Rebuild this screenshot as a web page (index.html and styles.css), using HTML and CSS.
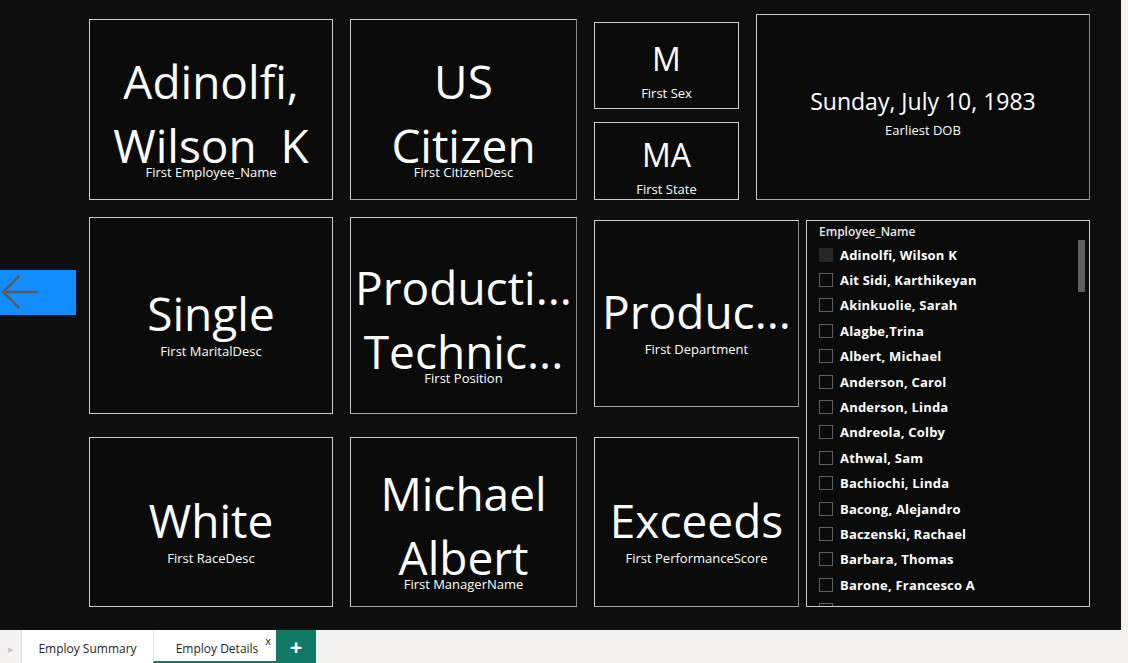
FILE: index.html
```html
<!DOCTYPE html>
<html lang="en">
<head>
    <meta charset="UTF-8">
    <meta name="viewport" content="width=device-width, initial-scale=1.0">
    <title>Employ Details</title>
    <link rel="stylesheet" href="styles.css">
</head>
<body>
    <main class="canvas">
        <div class="back-cell">
            <button class="back-btn" aria-label="Back">
                <svg width="76" height="45" viewBox="0 0 76 45">
                    <path d="M38 22H3M19 6L3 22L19 38" fill="none" stroke="#5b5b5b" stroke-width="2.5"/>
                </svg>
            </button>
        </div>

        <div class="card name">
            <div class="value two-line">Adinolfi,<br>Wilson&nbsp; K</div>
            <div class="label">First Employee_Name</div>
        </div>
        <div class="card citizen shade">
            <div class="value two-line">US<br>Citizen</div>
            <div class="label">First CitizenDesc</div>
        </div>
        <div class="mini-stack">
            <div class="card mini sex">
                <div class="value">M</div>
                <div class="label">First Sex</div>
            </div>
            <div class="card mini state">
                <div class="value">MA</div>
                <div class="label">First State</div>
            </div>
        </div>
        <div class="card dob shade">
            <div class="value">Sunday, July 10, 1983</div>
            <div class="label">Earliest DOB</div>
        </div>

        <div class="card marital">
            <div class="value">Single</div>
            <div class="label">First MaritalDesc</div>
        </div>
        <div class="card position shade">
            <div class="value two-line">Producti...<br>Technic...</div>
            <div class="label">First Position</div>
        </div>
        <div class="card department shade">
            <div class="value">Produc...</div>
            <div class="label">First Department</div>
        </div>

        <div class="slicer shade">
            <div class="slicer-title">Employee_Name</div>
            <ul class="slicer-list">
                <li><span class="check filled"></span>Adinolfi, Wilson K</li>
                <li><span class="check"></span>Ait Sidi, Karthikeyan</li>
                <li><span class="check"></span>Akinkuolie, Sarah</li>
                <li><span class="check"></span>Alagbe,Trina</li>
                <li><span class="check"></span>Albert, Michael</li>
                <li><span class="check"></span>Anderson, Carol</li>
                <li><span class="check"></span>Anderson, Linda</li>
                <li><span class="check"></span>Andreola, Colby</li>
                <li><span class="check"></span>Athwal, Sam</li>
                <li><span class="check"></span>Bachiochi, Linda</li>
                <li><span class="check"></span>Bacong, Alejandro</li>
                <li><span class="check"></span>Baczenski, Rachael</li>
                <li><span class="check"></span>Barbara, Thomas</li>
                <li><span class="check"></span>Barone, Francesco A</li>
                <li><span class="check"></span></li>
            </ul>
            <div class="scroll-thumb"></div>
        </div>

        <div class="card race">
            <div class="value">White</div>
            <div class="label">First RaceDesc</div>
        </div>
        <div class="card manager shade">
            <div class="value two-line">Michael<br>Albert</div>
            <div class="label">First ManagerName</div>
        </div>
        <div class="card performance shade">
            <div class="value">Exceeds</div>
            <div class="label">First PerformanceScore</div>
        </div>
    </main>

    <nav class="tabs">
        <div class="tab-arrow">&#9656;</div>
        <div class="tab">Employ Summary</div>
        <div class="tab active">Employ Details<span class="tab-close">x</span></div>
        <div class="tab-add">+</div>
    </nav>
</body>
</html>
```

FILE: styles.css
```css
body {
    margin: 0;
    background-color: #f3f2f1;
    font-family: "Open Sans", "Noto Sans", sans-serif;
    color: #ffffff;
    overflow: hidden;
}

.canvas {
    width: 1121px;
    height: 630px;
    box-sizing: border-box;
    padding-top: 14px;
    background-color: #0e0e0e;
    display: grid;
    grid-template-columns: 72px 244px 227px 145px 334px;
    grid-template-rows: 186px 197px 176px;
    column-gap: 17px;
    row-gap: 17px;
    align-items: start;
}

/* back button */
.back-cell {
    grid-column: 1;
    grid-row: 2;
    padding-top: 53px;
}
.back-btn {
    display: block;
    width: 76px;
    height: 45px;
    padding: 0;
    border: none;
    background-color: #118dff;
}
.back-btn svg {
    display: block;
}

/* cards */
.card {
    box-sizing: border-box;
    height: 100%;
    padding-top: 10px;
    border: 1px solid #cdcdcd;
    background-color: #0b0b0b;
    display: flex;
    flex-direction: column;
    align-items: center;
    justify-content: center;
    text-align: center;
    overflow: hidden;
}
.card.shade {
    border-right-color: #8c8c8c;
    border-bottom-color: #a8a8a8;
}
.value {
    font-size: 46px;
    line-height: 64px;
    margin-bottom: -3px;
    white-space: nowrap;
}
.value.two-line {
    margin-bottom: -14px;
}
.label {
    position: relative;
    font-size: 13px;
    line-height: 18px;
    white-space: nowrap;
}

.name {
    grid-column: 2;
    grid-row: 1;
    height: 181px;
    margin-top: 5px;
}
.citizen {
    grid-column: 3;
    grid-row: 1;
    height: 181px;
    margin-top: 5px;
}
.mini-stack {
    grid-column: 4;
    grid-row: 1;
    padding-top: 8px;
    display: flex;
    flex-direction: column;
    gap: 13px;
}
.card.mini .value {
    font-size: 32px;
    line-height: 40px;
    margin-bottom: 5px;
}
.sex {
    height: 87px;
}
.state {
    height: 78px;
}
.dob {
    grid-column: 5;
    grid-row: 1;
    height: 186px;
}
.card.dob .value {
    font-size: 23px;
    line-height: 30px;
    margin-bottom: 5px;
}

.marital {
    grid-column: 2;
    grid-row: 2;
}
.position {
    grid-column: 3;
    grid-row: 2;
}
.department {
    grid-column: 4 / span 2;
    grid-row: 2;
    width: 205px;
    height: 187px;
    margin-top: 3px;
}

.race {
    grid-column: 2;
    grid-row: 3;
    height: 170px;
    margin-top: 6px;
}
.manager {
    grid-column: 3;
    grid-row: 3;
    height: 170px;
    margin-top: 6px;
}
.performance {
    grid-column: 4 / span 2;
    grid-row: 3;
    width: 205px;
    height: 170px;
    margin-top: 6px;
}

/* slicer */
.slicer {
    grid-column: 5;
    grid-row: 2 / span 2;
    justify-self: end;
    position: relative;
    box-sizing: border-box;
    width: 284px;
    height: 387px;
    margin-top: 3px;
    padding: 2px 0 0 12px;
    border: 1px solid #cdcdcd;
    background-color: #0b0b0b;
    overflow: hidden;
}
.slicer-title {
    font-size: 12px;
    font-weight: 600;
    line-height: 18px;
    color: #e8e8e8;
}
.slicer-list {
    list-style: none;
    margin: 1px 0 0;
    padding: 0;
}
.slicer-list li {
    display: flex;
    align-items: center;
    gap: 7px;
    height: 25.4px;
    font-size: 13px;
    font-weight: 700;
    letter-spacing: 0.2px;
    white-space: nowrap;
}
.check {
    box-sizing: border-box;
    width: 14px;
    height: 14px;
    border: 1px solid #5e5e5e;
    flex-shrink: 0;
}
.check.filled {
    border-color: #262626;
    background-color: #262626;
}
.scroll-thumb {
    position: absolute;
    top: 19px;
    right: 4px;
    width: 7px;
    height: 52px;
    background-color: #5f5f5f;
}

/* page tabs */
.tabs {
    display: flex;
    height: 33px;
    width: 1128px;
    background-color: #f3f2f1;
    font-size: 12px;
    color: #252423;
}
.tab-arrow {
    width: 21px;
    padding-top: 2px;
    line-height: 33px;
    text-align: center;
    font-size: 11px;
    color: #c8c6c4;
}
.tab {
    position: relative;
    box-sizing: border-box;
    display: flex;
    align-items: center;
    justify-content: center;
    width: 132px;
    padding-top: 4px;
    border-left: 1px solid #e1dfdd;
    background-color: #ffffff;
}
.tab.active {
    width: 123px;
    padding: 6px 0 0 4px;
    border-bottom: 2px solid #117865;
}
.tab-close {
    position: absolute;
    top: 4px;
    right: 5px;
    font-size: 11px;
    line-height: 14px;
}
.tab-add {
    width: 40px;
    background-color: #117865;
    color: #ffffff;
    font-size: 22px;
    font-weight: 700;
    line-height: 33px;
    text-align: center;
}
```
